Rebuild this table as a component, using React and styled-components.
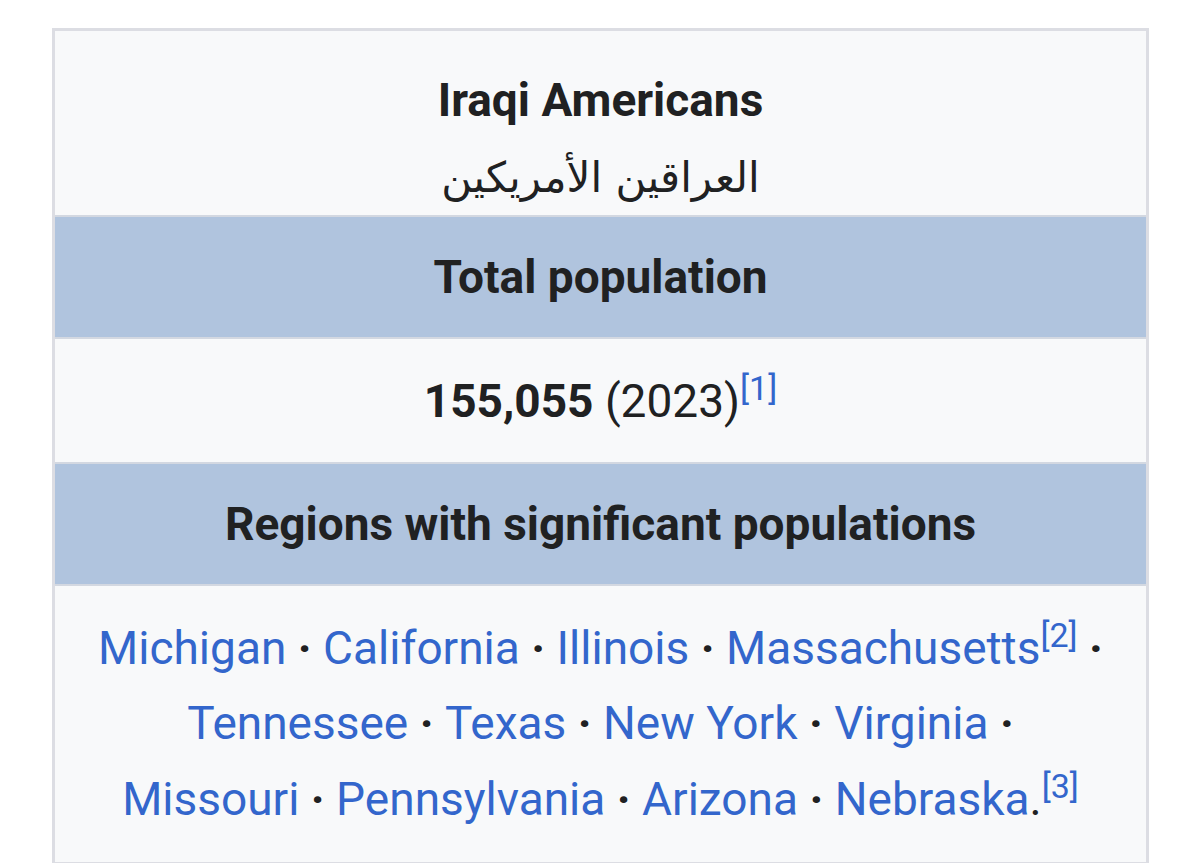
import React from 'react';
import styled, { createGlobalStyle } from 'styled-components';

const GlobalStyle = createGlobalStyle`
  html, body {
    margin: 0;
    padding: 0;
    background: #ffffff;
    overflow: hidden;
  }
  body {
    font-family: Roboto, "Liberation Sans", sans-serif;
    color: #202122;
  }
`;

const regions = [
  [{ name: 'Michigan' }, { name: 'California' }, { name: 'Illinois' }, { name: 'Massachusetts', ref: 2 }],
  [{ name: 'Tennessee' }, { name: 'Texas' }, { name: 'New York' }, { name: 'Virginia' }],
  [{ name: 'Missouri' }, { name: 'Pennsylvania' }, { name: 'Arizona' }, { name: 'Nebraska', ref: 3, last: true }],
];

function App() {
  return (
    <Page>
      <GlobalStyle />
      <Infobox>
        <TitleRow>
          <Title>Iraqi Americans</Title>
          <Native lang="ar" dir="rtl">العراقين الأمريكين</Native>
        </TitleRow>
        <Row $h={120} $header>
          <HeaderText>Total population</HeaderText>
        </Row>
        <Row $h={123}>
          <Figure>
            <strong>155,055</strong> (2023)<Ref>[1]</Ref>
          </Figure>
        </Row>
        <Row $h={120} $header>
          <HeaderText>Regions with significant populations</HeaderText>
        </Row>
        <Row $h={276}>
          <Places>
            {regions.map((line, i) => (
              <PlaceLine key={i}>
                {line.map(p => (
                  <React.Fragment key={p.name}>
                    <Place href="#">{p.name}</Place>
                    {p.last && <Stop>.</Stop>}
                    {p.ref && <Ref>[{p.ref}]</Ref>}
                    {!p.last && <Sep> · </Sep>}
                  </React.Fragment>
                ))}
              </PlaceLine>
            ))}
          </Places>
        </Row>
      </Infobox>
    </Page>
  );
}

const Page = styled.div`
  padding: 28px 0 0 52px;
  height: 863px;
  box-sizing: border-box;
`;

const Infobox = styled.div`
  width: 1097px;
  box-sizing: border-box;
  border: 3px solid #dcdde3;
  background: #f8f9fa;
  display: flex;
  flex-direction: column;
`;

const Row = styled.div`
  height: ${p => p.$h}px;
  flex-shrink: 0;
  display: flex;
  flex-direction: column;
  align-items: center;
  justify-content: center;
  text-align: center;
  background: ${p => (p.$header ? '#b0c4de' : '#f8f9fa')};
  border-top: 2px solid #d3d8e1;
`;

const TitleRow = styled.div`
  height: 184px;
  flex-shrink: 0;
  box-sizing: border-box;
  padding-top: 29px;
  display: flex;
  flex-direction: column;
  align-items: center;
  text-align: center;
`;

const Title = styled.div`
  font-size: 46px;
  font-weight: 700;
  line-height: 80px;
  color: #202122;
`;

const Native = styled.div`
  font-family: "DejaVu Sans", "Noto Sans", sans-serif;
  font-size: 42px;
  line-height: 76px;
  color: #202122;
`;

const HeaderText = styled.div`
  font-size: 46px;
  font-weight: 700;
  color: #202122;
`;

const Figure = styled.div`
  font-size: 46px;
  color: #202122;
  strong {
    font-weight: 700;
  }
`;

const Ref = styled.sup`
  font-size: 34px;
  line-height: 0;
  color: #3366cc;
  vertical-align: 0;
  position: relative;
  top: -17px;
`;

const Places = styled.div`
  font-size: 46px;
  line-height: 75.5px;
`;

const PlaceLine = styled.div`
  white-space: nowrap;
`;

const Place = styled.a`
  color: #3366cc;
  text-decoration: none;
`;

const Sep = styled.span`
  color: #202122;
  font-weight: 700;
`;

const Stop = styled.span`
  color: #202122;
`;

export default App;
